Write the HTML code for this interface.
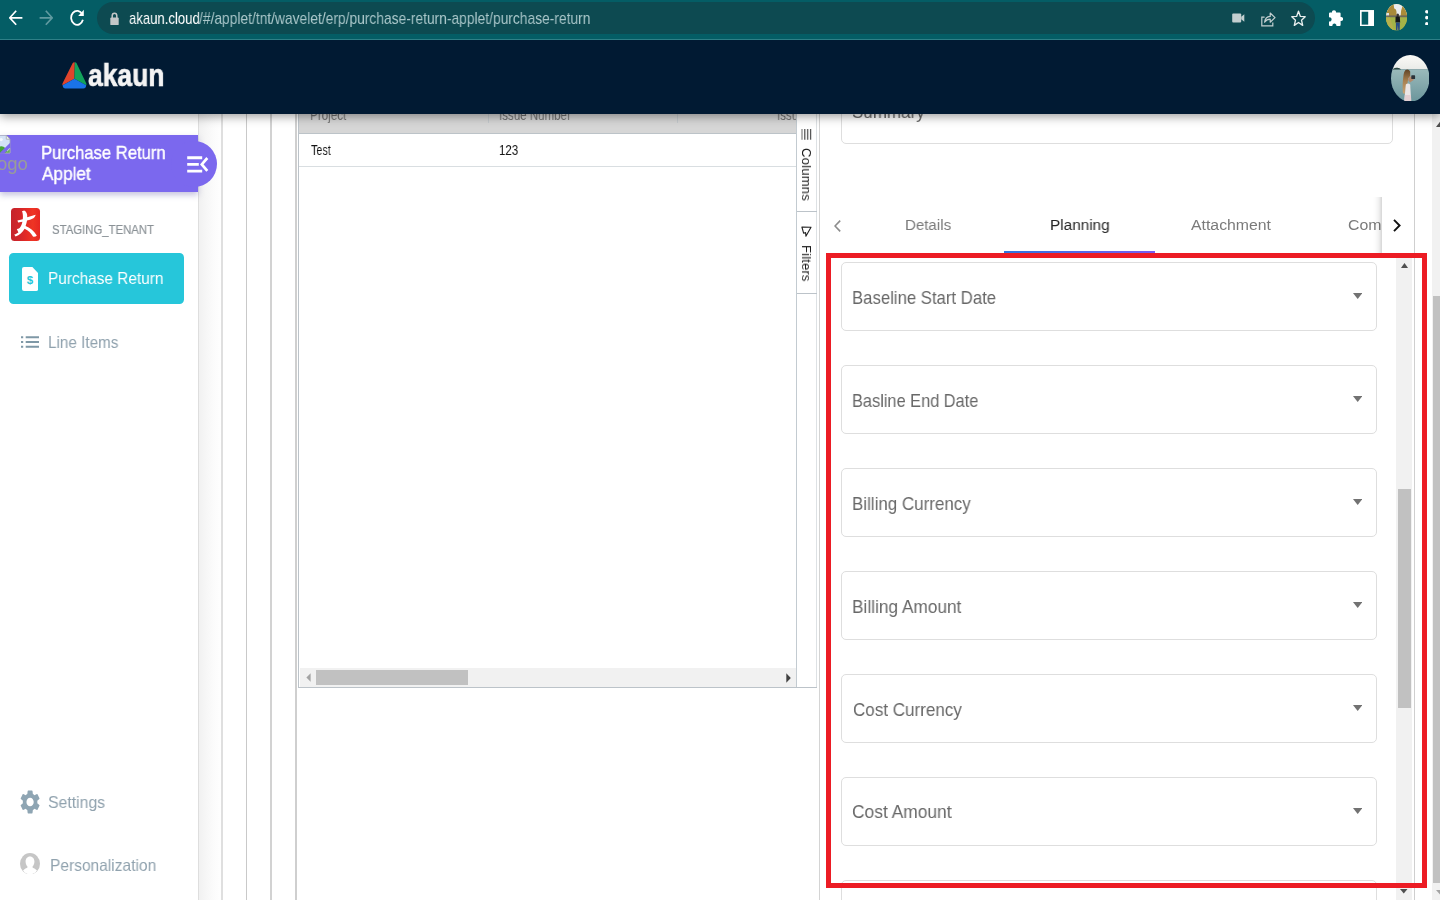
<!DOCTYPE html>
<html lang="en"><head><meta charset="utf-8"><title>akaun - Purchase Return</title>
<style>

html,body{margin:0;padding:0;background:#fff;}
body{width:1440px;height:900px;overflow:hidden;font-family:"Liberation Sans",sans-serif;}
#root{position:relative;width:1440px;height:900px;overflow:hidden;background:#fff;}
#root div,#root svg,#root span{position:absolute;box-sizing:border-box;}
.t{white-space:nowrap;line-height:1;transform-origin:0 0;display:inline-block;z-index:1;will-change:transform;}
.vl{top:113px;bottom:0;width:1.6px;}
.field{left:841px;width:536px;height:69px;border:1px solid #dedede;border-radius:5px;background:#fff;}
.dd{width:9.4px;height:6px;left:1352.8px;}

</style></head>
<body>
<div id="root">
<div style="left:198.5px;top:113px;width:23.50px;height:787.00px;background:linear-gradient(to right,#f1f1f1 0%,#fbfbfb 60%,#fff 100%);"></div>
<div class="vl" style="left:197.7px;background:#dedede;"></div>
<div class="vl" style="left:221.3px;background:#dfdfdf;"></div>
<div class="vl" style="left:245.8px;background:#c9c9c9;"></div>
<div class="vl" style="left:270.1px;background:#d2d2d2;"></div>
<div class="vl" style="left:295.1px;background:#cfcfcf;"></div>
<div class="vl" style="left:298px;width:1px;background:#bcc3c9;height:575px;bottom:auto;"></div>
<div style="left:299px;top:113px;width:498.00px;height:21.00px;background:#d6d6d6;border-bottom:1px solid #bcc3c8;"></div>
<div style="left:488px;top:113px;width:1.00px;height:10.00px;background:#c4c9cd;"></div>
<div style="left:677px;top:113px;width:1.00px;height:10.00px;background:#c4c9cd;"></div>
<div style="left:299px;top:166px;width:498.00px;height:1.00px;background:#d9dee1;"></div>
<div style="left:300px;top:668px;width:496.00px;height:19.00px;background:#f1f1f1;"></div>
<div style="left:315.6px;top:669.6px;width:152.00px;height:15.20px;background:#c1c1c1;"></div>
<svg style="left:305.5px;top:673px" width="5" height="9" viewBox="0 0 5 9"><path d="M4.6 0.2L0.4 4.5L4.6 8.8Z" fill="#a3a3a3"/></svg>
<svg style="left:785.5px;top:672.5px" width="5" height="10" viewBox="0 0 5 10"><path d="M0.3 0.2L4.8 5L0.3 9.8Z" fill="#404040"/></svg>
<div style="left:298px;top:686.7px;width:519.30px;height:1.10px;background:#bcc3c9;"></div>
<span class="t" style="left:128.62px;top:10px;font-size:17px;color:#ffffff;transform:scaleX(0.7720);z-index:6;">akaun.cloud</span>
<span class="t" style="left:198.60px;top:10px;font-size:17px;color:#a9c6c9;transform:scaleX(0.8121);z-index:6;">/#/applet/tnt/wavelet/erp/purchase-return-applet/purchase-return</span>
<span class="t" style="left:88.09px;top:59px;font-size:32px;color:#f4f4f4;font-weight:700;transform:scaleX(0.8262);z-index:6;-webkit-text-stroke:0.7px #f4f4f4;">akaun</span>
<span class="t" style="left:-2.57px;top:155px;font-size:18.5px;color:#999d98;transform:scaleX(1.0004);">ogo</span>
<span class="t" style="left:41.40px;top:144px;font-size:18.5px;color:#ffffff;transform:scaleX(0.8980);-webkit-text-stroke:0.4px #fff;">Purchase Return</span>
<span class="t" style="left:42.24px;top:165px;font-size:18.5px;color:#ffffff;transform:scaleX(0.9281);-webkit-text-stroke:0.4px #fff;">Applet</span>
<span class="t" style="left:52.22px;top:223px;font-size:13px;color:#8a9196;transform:scaleX(0.8732);-webkit-text-stroke:0.2px #8a9196;">STAGING_TENANT</span>
<span class="t" style="left:47.99px;top:270px;font-size:16.5px;color:#ffffff;transform:scaleX(0.9318);">Purchase Return</span>
<span class="t" style="left:48.00px;top:334px;font-size:16.5px;color:#90a2ae;transform:scaleX(0.9262);">Line Items</span>
<span class="t" style="left:48.01px;top:794px;font-size:16.5px;color:#90a2ae;transform:scaleX(0.9582);">Settings</span>
<span class="t" style="left:49.77px;top:857px;font-size:16.5px;color:#90a2ae;transform:scaleX(0.9412);">Personalization</span>
<span class="t" style="left:310.03px;top:108px;font-size:14.6px;color:#707070;transform:scaleX(0.8011);">Project</span>
<span class="t" style="left:498.89px;top:108px;font-size:14.6px;color:#707070;transform:scaleX(0.7910);">Issue Number</span>
<span class="t" style="left:776.89px;top:108px;font-size:14.6px;color:#707070;transform:scaleX(0.7893);">Issu</span>
<span class="t" style="left:310.52px;top:143px;font-size:14.6px;color:#151515;transform:scaleX(0.7375);">Test</span>
<span class="t" style="left:499.44px;top:143px;font-size:14.6px;color:#151515;transform:scaleX(0.7909);">123</span>
<span class="t" style="left:851.99px;top:103px;font-size:18.5px;color:#666666;transform:scaleX(0.9174);">Summary</span>
<span class="t" style="left:905.26px;top:217px;font-size:15.5px;color:#7a7a7a;transform:scaleX(0.9721);">Details</span>
<span class="t" style="left:1050.15px;top:217px;font-size:15.5px;color:#262626;transform:scaleX(0.9884);">Planning</span>
<span class="t" style="left:1191.48px;top:217px;font-size:15.5px;color:#7a7a7a;transform:scaleX(1.0202);">Attachment</span>
<span class="t" style="left:1347.99px;top:217px;font-size:15.5px;color:#7a7a7a;transform:scaleX(1.0226);">Com</span>
<span class="t" style="left:851.91px;top:289px;font-size:18.5px;color:#686868;transform:scaleX(0.9040);">Baseline Start Date</span>
<span class="t" style="left:851.94px;top:392px;font-size:18.5px;color:#686868;transform:scaleX(0.8836);">Basline End Date</span>
<span class="t" style="left:851.89px;top:495px;font-size:18.5px;color:#686868;transform:scaleX(0.9167);">Billing Currency</span>
<span class="t" style="left:851.87px;top:598px;font-size:18.5px;color:#686868;transform:scaleX(0.9334);">Billing Amount</span>
<span class="t" style="left:852.50px;top:701px;font-size:18.5px;color:#686868;transform:scaleX(0.9201);">Cost Currency</span>
<span class="t" style="left:852.48px;top:803px;font-size:18.5px;color:#686868;transform:scaleX(0.9395);">Cost Amount</span>
<div style="left:796.2px;top:113px;width:21.10px;height:574.00px;background:#fff;border-left:1px solid #c3cbd1;border-right:1px solid #dde1e4;z-index:2;"></div>
<div style="left:797px;top:210.5px;width:19.50px;height:1.20px;background:#bcc3c9;z-index:2;"></div>
<div style="left:797px;top:293px;width:19.50px;height:1.00px;background:#bcc3c9;z-index:2;"></div>
<svg style="left:801px;top:128.800px;z-index:3" width="11" height="10.800" viewBox="0 0 11 10.800"><path d="M1 0V10.700" stroke="#9a9a9a" stroke-width="1.500"/><path d="M3.750 0V10.700M6.650 0V10.700" stroke="#6a6a6a" stroke-width="1.450"/><path d="M9.600 0V10.700" stroke="#585858" stroke-width="1.300"/></svg>
<svg style="left:801px;top:225.600px;z-index:3" width="11" height="11" viewBox="0 0 11 11"><path d="M10 1.2L0.9 1.0L2.6 7.2L4.6 6.6L4.9 10.2Z" transform="" fill="none" stroke="#222" stroke-width="1.1" stroke-linejoin="round"/></svg>
<span class="t" style="left:812.6px;top:147.6px;font-size:13.2px;color:#1c1c1c;transform-origin:0 0;transform:rotate(90deg) scaleX(0.99);z-index:3;letter-spacing:.2px">Columns</span>
<span class="t" style="left:812.6px;top:245px;font-size:13.2px;color:#1c1c1c;transform-origin:0 0;transform:rotate(90deg) scaleX(0.98);z-index:3;letter-spacing:.2px">Filters</span>
<div class="vl" style="left:819.2px;width:1.2px;background:#d4d4d4;"></div>
<div class="vl" style="left:1414px;width:1.1px;background:#cfcfcf;"></div>
<div style="left:841px;top:90px;width:552.00px;height:54.40px;border:1px solid #dedede;border-radius:5px;"></div>
<svg style="left:833.5px;top:219.5px" width="7" height="12" viewBox="0 0 7 12"><path d="M6.2 0.6L1 6L6.2 11.4" fill="none" stroke="#8c8c8c" stroke-width="1.6"/></svg>
<div style="left:1004px;top:250.6px;width:151.00px;height:3.40px;background:linear-gradient(to right,#2f74dd,#7a5cf0);"></div>
<div style="left:1381.8px;top:196px;width:32.20px;height:56.00px;background:#fff;z-index:2;"></div>
<div style="left:1372.8px;top:196.5px;width:9.00px;height:56.70px;background:linear-gradient(to left,rgba(0,0,0,.16),rgba(0,0,0,.06) 35%,rgba(0,0,0,.015) 70%,rgba(0,0,0,0));z-index:2;"></div>
<svg style="left:1393.2px;top:218.5px;z-index:3" width="8" height="13" viewBox="0 0 8 13"><path d="M1 0.8L6.6 6.5L1 12.2" fill="none" stroke="#111" stroke-width="1.9"/></svg>
<div class="field" style="top:262px;z-index:0"></div>
<svg class="dd" style="top:293.1px" viewBox="0 0 9.4 6"><path d="M0 0H9.400L4.700 6Z" fill="#727272"/></svg>
<div class="field" style="top:365px;z-index:0"></div>
<svg class="dd" style="top:396.1px" viewBox="0 0 9.4 6"><path d="M0 0H9.400L4.700 6Z" fill="#727272"/></svg>
<div class="field" style="top:468px;z-index:0"></div>
<svg class="dd" style="top:499.1px" viewBox="0 0 9.4 6"><path d="M0 0H9.400L4.700 6Z" fill="#727272"/></svg>
<div class="field" style="top:571px;z-index:0"></div>
<svg class="dd" style="top:602.1px" viewBox="0 0 9.4 6"><path d="M0 0H9.400L4.700 6Z" fill="#727272"/></svg>
<div class="field" style="top:674px;z-index:0"></div>
<svg class="dd" style="top:705.1px" viewBox="0 0 9.4 6"><path d="M0 0H9.400L4.700 6Z" fill="#727272"/></svg>
<div class="field" style="top:777px;z-index:0"></div>
<svg class="dd" style="top:808.1px" viewBox="0 0 9.4 6"><path d="M0 0H9.400L4.700 6Z" fill="#727272"/></svg>
<div class="field" style="top:880px;z-index:0"></div>
<svg class="dd" style="top:911.1px" viewBox="0 0 9.4 6"><path d="M0 0H9.400L4.700 6Z" fill="#727272"/></svg>
<div style="left:1396px;top:254px;width:16.00px;height:646.00px;background:#f1f1f1;"></div>
<div style="left:1398px;top:489px;width:12.60px;height:219.00px;background:#c1c1c1;"></div>
<svg style="left:1400.8px;top:263px" width="7" height="5" viewBox="0 0 8 5" preserveAspectRatio="none"><path d="M0 5L4 0L8 5Z" fill="#505050"/></svg>
<svg style="left:1400.4px;top:889.2px" width="7.500" height="4.500" viewBox="0 0 8 5" preserveAspectRatio="none"><path d="M0 0L4 5L8 0Z" fill="#505050"/></svg>
<div style="left:1432.3px;top:113px;width:16.00px;height:787.00px;background:#f1f1f1;"></div>
<div style="left:1433.3px;top:296px;width:13.70px;height:587.00px;background:#c1c1c1;"></div>
<svg style="left:1436px;top:121px" width="9" height="6" viewBox="0 0 9 6"><path d="M0 6L4.5 0L9 6Z" fill="#505050"/></svg>
<svg style="left:1436px;top:890.2px" width="9" height="5" viewBox="0 0 9 5"><path d="M0 0L4.5 5L9 0Z" fill="#a3a3a3"/></svg>
<div style="left:826.3px;top:253.2px;width:600.50px;height:4.70px;background:#ec1c24;z-index:4;"></div>
<div style="left:826.3px;top:883.1px;width:600.50px;height:4.60px;background:#ec1c24;z-index:4;"></div>
<div style="left:826.3px;top:253.2px;width:4.90px;height:634.50px;background:#ec1c24;z-index:4;"></div>
<div style="left:1422.1px;top:253.2px;width:4.70px;height:634.50px;background:#ec1c24;z-index:4;"></div>
<div style="left:0px;top:134.9px;width:198.30px;height:57.50px;background:#7b68ee;box-shadow:0 3px 6px rgba(90,80,160,.35);"></div>
<div style="left:170.5px;top:140.8px;width:46.00px;height:46.50px;background:#7b68ee;border-radius:50%;"></div>
<svg style="left:186.5px;top:156.2px" width="22" height="17" viewBox="0 0 22 17"><path d="M0.2 1.7H15.2M0.2 8.4H11.8M0.2 15.1H15.2" stroke="#fff" stroke-width="2.9" fill="none"/><path d="M20.300 2L14.800 8.400L20.300 14.800" stroke="#fff" stroke-width="2.700" fill="none"/></svg>
<svg style="left:0px;top:135.2px" width="10.500" height="18.400" viewBox="0 0 10.500 18.400"><path d="M-2 0.300H6.300L10 4.200V18H-2Z" fill="#d3e2f6" stroke="#a9adb5" stroke-width=".8"/><path d="M6.300 0.300V4.200H10Z" fill="#f6f6f6" stroke="#9a9ea6" stroke-width=".7"/><circle cx="1.200" cy="4.600" r="1.600" fill="#f4f8fd"/><path d="M-2 18V12.400Q2 9.800 5.600 13.200L8.500 18Z" fill="#46a536"/><path d="M-1 18.600L10.200 7.800V12.300L4.300 18.600Z" fill="#7b68ee"/><path d="M5.600 18L10 13.600V18Z" fill="#63b352" stroke="#a9adb5" stroke-width=".6"/></svg>
<div style="left:11px;top:208px;width:29.20px;height:32.70px;background:linear-gradient(90deg,#c5232b 0%,#d2262a 30%,#e52b25 55%,#ee3524 75%,#e72622 100%);border-radius:3.5px;"></div>
<svg style="left:11px;top:208px" width="29.2" height="32.7" viewBox="0 0 29.2 32.7"><path d="M13.2 2.4C15.5 3.6 16.6 6 16.2 9.2L24.6 6.8C24.2 9.4 22 11.400 16 12.600C15.600 15 15.200 16.400 14.600 18C18.600 19.400 23 22.600 25.800 27.600C25 28.800 23.400 29 22 28.600C20.200 25.200 17.400 22.600 13.600 20.800C11.600 24.400 8.400 27.200 4.600 28.400L3.200 26.600C5.200 25.800 6.400 25.200 7.400 24.400L5.800 21C8.600 21.200 10.400 18.600 11.400 13.800L7.200 14.600L6.400 12.600L11.800 11.200C12.200 8 11.800 5 11 3.200Z" fill="#fff"/></svg>
<div style="left:9.1px;top:252.8px;width:174.70px;height:51.70px;background:#26c6da;border-radius:4.5px;"></div>
<svg style="left:22px;top:267px" width="16.2" height="24" viewBox="0 0 16.2 24"><path d="M2 0H10.4L16.2 6.2V22Q16.2 24 14.2 24H2Q0 24 0 22V2Q0 0 2 0Z" fill="#fff"/><text x="8" y="17.4" font-family="Liberation Sans, sans-serif" font-size="11.5" font-weight="700" fill="#26c6da" text-anchor="middle">$</text></svg>
<svg style="left:20.8px;top:335.6px" width="18" height="12" viewBox="0 0 18 12"><path d="M0 1.3H2.2M0 6H2.2M0 10.7H2.2M4.7 1.3H18M4.7 6H18M4.7 10.7H18" stroke="#7f98a6" stroke-width="2.1" fill="none"/></svg>
<svg style="left:19.6px;top:789.6px" width="20.2" height="24" viewBox="2 2 20 20" preserveAspectRatio="none"><path fill="#8ea5b3" d="M19.14 12.94c.04-.3.06-.61.06-.94 0-.32-.02-.64-.07-.94l2.03-1.58a.49.49 0 0 0 .12-.61l-1.92-3.32a.488.488 0 0 0-.59-.22l-2.39.96c-.5-.38-1.03-.7-1.62-.94l-.36-2.54a.484.484 0 0 0-.48-.41h-3.84c-.24 0-.43.17-.47.41l-.36 2.54c-.59.24-1.13.57-1.62.94l-2.39-.96c-.22-.08-.47 0-.59.22L2.74 8.87c-.12.21-.08.47.12.61l2.03 1.58c-.05.3-.09.63-.09.94s.02.64.07.94l-2.03 1.58a.49.49 0 0 0-.12.61l1.92 3.32c.12.22.37.29.59.22l2.39-.96c.5.38 1.03.7 1.62.94l.36 2.54c.05.24.24.41.48.41h3.84c.24 0 .44-.17.47-.41l.36-2.54c.59-.24 1.13-.56 1.62-.94l2.39.96c.22.08.47 0 .59-.22l1.92-3.32c.12-.22.07-.47-.12-.61l-2.01-1.58zM12 15.6c-1.98 0-3.6-1.62-3.6-3.6s1.620-3.6 3.6-3.600 3.600 1.620 3.600 3.600-1.620 3.600-3.600 3.600z"/></svg>
<svg style="left:19.5px;top:852.5px" width="20" height="21.5" viewBox="0 0 20 21.5"><ellipse cx="10" cy="10.75" rx="10" ry="10.75" fill="#c6c6c6"/><path d="M10 3.4C13 3.4 14.6 6 14.4 9C14.2 11.4 13.2 13 12.2 14C13.4 15.4 15.6 15.8 17 17.4C15.4 19.8 13 21.3 10 21.3C7 21.3 4.600 19.800 3 17.400C4.400 15.800 6.600 15.400 7.800 14C6.800 13 5.800 11.400 5.600 9C5.400 6 7 3.400 10 3.400Z" fill="#fff"/></svg>
<div style="left:0px;top:40px;width:1440.00px;height:73.60px;background:#011a33;box-shadow:0 2px 10px rgba(0,0,0,.42);z-index:5;"></div>
<div style="left:0px;top:0px;width:1440.00px;height:39.00px;background:#045d65;z-index:5;"></div>
<div style="left:0px;top:38.8px;width:1440.00px;height:1.00px;background:#2f8087;z-index:5;"></div>
<div style="left:97px;top:2.2px;width:1218.00px;height:31.60px;background:#0d4a51;border-radius:16px;z-index:5;"></div>
<svg style="left:61.5px;top:61.5px;z-index:6" width="25" height="27" viewBox="0 0 25 27"><path d="M12.8 0.4L12.4 16.8L0.6 23.2Q0 22.4 0.6 21.2L10.6 1.2Q11.6 0 12.8 0.4Z" fill="#e0452c"/><path d="M12.8 0.4L12.4 16.8L24.2 23.2Q24.8 22.4 24.2 21.2L14.6 1.2Q13.8 0.200 12.800 0.400Z" fill="#12a35c"/><path d="M12.4 16.8L0.6 23.2Q1 26.4 3.4 26.6H21.400Q23.800 26.400 24.200 23.200Z" fill="#1a73e8"/></svg>
<svg style="left:1390.8px;top:54.6px;z-index:6" width="38.5" height="46.7" viewBox="0 0 38.5 46.7"><defs><clipPath id="av"><ellipse cx="19.25" cy="23.35" rx="19.25" ry="23.35"/></clipPath><linearGradient id="sea" x1="0" y1="0" x2="0" y2="1"><stop offset="0" stop-color="#9bbabb"/><stop offset="1" stop-color="#6a959b"/></linearGradient><linearGradient id="sky" x1="0" y1="0" x2="0" y2="1"><stop offset="0" stop-color="#fbfaf7"/><stop offset="1" stop-color="#e9ebe8"/></linearGradient><linearGradient id="hair" x1="0" y1="0" x2="0" y2="1"><stop offset="0" stop-color="#5f4327"/><stop offset=".45" stop-color="#a8804f"/><stop offset="1" stop-color="#c9a679"/></linearGradient></defs><g clip-path="url(#av)"><rect width="38.5" height="14.4" fill="url(#sky)"/><rect y="14.2" width="38.5" height="33" fill="url(#sea)"/><path d="M1.4 14.4Q3 12.600 5.500 12.800Q8.500 12.400 10.200 14.400Z" fill="#2c4a44"/><path d="M14.500 15Q17.500 13.600 19.200 16.500L19.200 21L17.200 23.500L16.200 30Q14.200 36 13.400 39.500L11.800 37.500Q11.300 28 12.300 22Q12.600 17 14.500 15Z" fill="url(#hair)"/><path d="M18 21.800L22.200 21.400L22.600 25L19 27.500L17 25Z" fill="#b48a6c"/><rect x="20.300" y="20.300" width="3.800" height="3.800" rx=".6" fill="#2c3238"/><path d="M14.800 29.500Q17 27.500 19.200 29.500L20.200 46.700H13.200Z" fill="#ebe6e6"/><path d="M13.800 40L20 40L20.200 46.700H13.200Z" fill="#e3cfd2"/></g></svg>
<svg style="left:8.8px;top:9.5px;z-index:6" width="14" height="16" viewBox="0 0 14 16"><path d="M13.400 7.800H1.400M7.200 0.800L0.800 7.800L7.200 14.800" fill="none" stroke="#fff" stroke-width="1.7"/></svg>
<svg style="left:39.2px;top:9.5px;z-index:6" width="14" height="16" viewBox="0 0 14 16"><path d="M0.600 7.800H12.600M6.800 0.800L13.200 7.800L6.800 14.800" fill="none" stroke="#5f9aa0" stroke-width="1.7"/></svg>
<svg style="left:69.5px;top:9px;z-index:6" width="15" height="17" viewBox="0 0 15 17"><path d="M12.300 5.200A6 7 0 1 0 12.900 10.800" fill="none" stroke="#fff" stroke-width="1.8"/><path d="M13.800 0.800V7H8.200Z" fill="#fff"/></svg>
<svg style="left:109.5px;top:11.5px;z-index:6" width="9" height="13.500" viewBox="0 0 9 13.500"><path d="M2.200 6V3.800A2.300 2.600 0 0 1 6.800 3.800V6" fill="none" stroke="#c4c7c8" stroke-width="1.5"/><rect x="0.300" y="5.400" width="8.400" height="7.800" rx="1" fill="#c4c7c8"/></svg>
<svg style="left:1231.5px;top:13px;z-index:6" width="13" height="10" viewBox="0 0 13 10"><rect x="0.200" y="0.400" width="9" height="9.200" rx="1" fill="#c3cfd0"/><path d="M9.200 3.800L12.300 1.200V8.800L9.200 6.200Z" fill="#c3cfd0"/></svg>
<svg style="left:1260.5px;top:10.500px;z-index:6" width="15" height="16" viewBox="0 0 15 16"><path d="M3.600 6.200H0.800V14.800H11.800V11.600" fill="none" stroke="#c3cfd0" stroke-width="1.200"/><path d="M3.600 11.200C4 7.600 6 5.600 9.200 5.400V2L14 6.600L9.200 11.200V8.200C6.800 8.200 5 9.200 3.600 11.200Z" fill="none" stroke="#c3cfd0" stroke-width="1.200" stroke-linejoin="round"/></svg>
<svg style="left:1290.5px;top:10px;z-index:6" width="15" height="16.500" viewBox="0 0 15 16.500"><path d="M7.500 1.200L9.400 6.400L14.200 6.700L10.500 10.200L11.700 15.400L7.500 12.500L3.300 15.400L4.500 10.200L0.800 6.700L5.600 6.400Z" fill="none" stroke="#e8eeee" stroke-width="1.350" stroke-linejoin="round"/></svg>
<svg style="left:1328.8px;top:9.800px;z-index:6" width="14.500" height="16.200" viewBox="0 0 14.500 16.200"><path d="M5 0.200C6.600 0.200 7.200 1.400 7 2.600H10.600Q11.600 2.600 11.600 3.600V7C12.800 6.800 14.300 7.400 14.300 9C14.300 10.600 12.800 11.200 11.600 11V15Q11.600 16 10.600 16H7.400C7.600 14.600 6.800 13.400 5.400 13.400C4 13.400 3.200 14.600 3.400 16H1Q0 16 0 15V11.400C1.400 11.600 2.600 10.800 2.600 9.400C2.600 8 1.400 7.200 0 7.400V3.600Q0 2.600 1 2.600H3C2.800 1.400 3.400 0.200 5 0.200Z" fill="#fff"/></svg>
<svg style="left:1359.500px;top:9.600px;z-index:6" width="14" height="16.400" viewBox="0 0 14 16.400"><rect x="0.800" y="0.900" width="12.400" height="14.600" fill="none" stroke="#fff" stroke-width="1.700"/><rect x="8.200" y="0.900" width="5" height="14.600" fill="#fff"/></svg>
<svg style="left:1386.100px;top:4.400px;z-index:6" width="21.200" height="26.500" viewBox="0 0 21.200 26.500"><defs><clipPath id="pv"><ellipse cx="10.600" cy="13.250" rx="10.600" ry="13.250"/></clipPath></defs><g clip-path="url(#pv)"><rect width="21.200" height="26.500" fill="#a8b44a"/><rect width="21.200" height="12" fill="#e9ecef"/><path d="M0 0H7.600L8.200 4.500Q10.800 5 10.600 10L10.400 12.600H0Z" fill="#a88a3a"/><path d="M0 9H3V12.600H0Z" fill="#dfe3e6"/><path d="M16.500 2Q18.500 2.500 21.200 5V12.600H14.600Q14.800 6 16.500 2Z" fill="#ab8c39"/><rect y="11.400" width="21.200" height="2.200" fill="#6f6a5a"/><rect y="13.400" width="21.200" height="13.100" fill="#a4b347"/><path d="M4 13.400L8 26.500H0V13.400Z" fill="#b6b04c"/><ellipse cx="11.700" cy="11" rx="1.300" ry="1.500" fill="#3a3434"/><path d="M9.600 12.800Q11.700 11.600 13.800 12.800L14.200 18.600H9.400Z" fill="#15171a"/><path d="M9.900 18.400H13.900L13.700 26.500H12.300L11.900 21L11.300 26.500H10Z" fill="#274a86"/></g></svg>
<svg style="left:1424.900px;top:9.700px;z-index:6" width="3.600" height="15.800" viewBox="0 0 3.600 15.800"><ellipse cx="1.750" cy="1.800" rx="1.650" ry="1.800" fill="#fff"/><ellipse cx="1.750" cy="7.650" rx="1.650" ry="1.800" fill="#fff"/><ellipse cx="1.750" cy="13.800" rx="1.650" ry="1.800" fill="#fff"/></svg>
</div>
</body></html>
